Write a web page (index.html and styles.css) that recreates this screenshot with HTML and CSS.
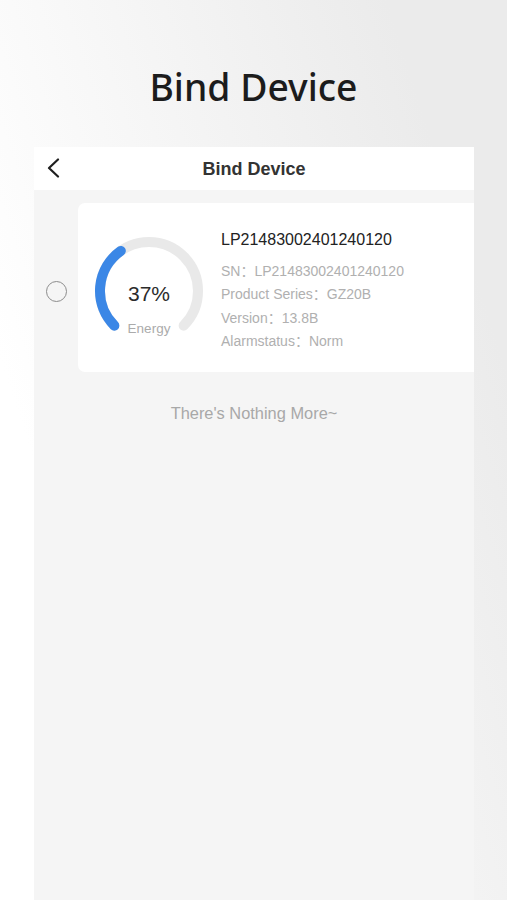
FILE: index.html
```html
<!DOCTYPE html>
<html lang="en">
<head>
<meta charset="utf-8">
<title>Bind Device</title>
<link rel="stylesheet" href="styles.css">
</head>
<body>
<div class="page">
  <header class="hero">
    <h1 class="hero-title">Bind Device</h1>
  </header>
  <main class="screen">
    <div class="navbar">
      <svg class="back" width="14" height="20" viewBox="0 0 14 20"><polyline points="12,1.5 3,10 12,18.5" fill="none" stroke="#1f1f1f" stroke-width="2.2" stroke-linecap="round" stroke-linejoin="round"/></svg>
      <div class="nav-title">Bind Device</div>
    </div>
    <div class="list">
      <div class="row">
        <div class="radio-col"><span class="radio"></span></div>
        <div class="card">
          <svg class="gauge" width="110" height="110" viewBox="0 0 110 110">
            <path d="M20.35 89.65 A49 49 0 1 1 89.65 89.65" fill="none" stroke="#e9e9e9" stroke-width="10" stroke-linecap="round"/>
            <path d="M20.35 89.65 A49 49 0 0 1 26.82 14.91" fill="none" stroke="#3b87e6" stroke-width="10" stroke-linecap="round"/>
            <text class="g-value" x="55" y="65" text-anchor="middle">37%</text>
            <text class="g-label" x="55" y="97.3" text-anchor="middle">Energy</text>
          </svg>
          <div class="info">
            <div class="name">LP21483002401240120</div>
            <div class="line">SN：LP21483002401240120</div>
            <div class="line">Product Series：GZ20B</div>
            <div class="line">Version：13.8B</div>
            <div class="line">Alarmstatus：Norm</div>
          </div>
        </div>
      </div>
      <p class="end">There's Nothing More~</p>
    </div>
  </main>
</div>
</body>
</html>
```

FILE: styles.css
```css
* { box-sizing: border-box; }
html, body { margin: 0; padding: 0; }
body {
  width: 507px;
  height: 900px;
  overflow: hidden;
  font-family: "Liberation Sans", Arial, "Noto Sans CJK SC", sans-serif;
  background: linear-gradient(72deg, #ffffff 22%, #ebebeb 85%);
}
.page {
  display: flex;
  flex-direction: column;
  height: 900px;
}
.hero {
  height: 147px;
  padding-top: 67px;
}
.hero-title {
  margin: 0;
  text-align: center;
  font-family: "Noto Sans", "Open Sans", sans-serif;
  font-weight: 500;
  font-size: 37.3px;
  line-height: 40px;
  color: #1c1c1c;
}
.screen {
  flex: 1;
  margin-left: 34px;
  width: 440px;
  background: #f5f5f5;
}
.navbar {
  height: 43px;
  background: #ffffff;
  display: flex;
  align-items: center;
  position: relative;
  padding-left: 46px;
}
.back {
  position: absolute;
  left: 12px;
  top: 11px;
}
.nav-title {
  flex: 1;
  margin-left: -46px;
  text-align: center;
  font-size: 18px;
  font-weight: bold;
  color: #333333;
  line-height: 20px;
}
.list {
  padding-top: 13px;
}
.row {
  display: flex;
  align-items: stretch;
}
.radio-col {
  width: 44px;
  display: flex;
  align-items: center;
  justify-content: center;
}
.radio {
  width: 21px;
  height: 21px;
  border: 1.5px solid #8c8c8c;
  border-radius: 50%;
  margin-top: 7px;
}
.card {
  flex: 1;
  height: 169px;
  background: #ffffff;
  border-radius: 7px 0 0 7px;
  display: flex;
  align-items: flex-start;
  padding: 27px 0 0 16px;
}
.gauge {
  margin-top: 6px;
  flex: none;
}
.g-value {
  font-family: "Liberation Sans", Arial, sans-serif;
  font-size: 21px;
  fill: #2b2b2b;
}
.g-label {
  font-family: "Liberation Sans", Arial, sans-serif;
  font-size: 13.5px;
  fill: #ababab;
}
.info {
  margin-left: 17px;
}
.name {
  font-size: 16px;
  line-height: 20px;
  color: #222222;
  margin-bottom: 10px;
}
.line {
  font-size: 14px;
  line-height: 23.3px;
  color: #b0b0b0;
}
.end {
  margin: 31px 0 0;
  text-align: center;
  font-size: 16.4px;
  line-height: 20px;
  color: #a8a8a8;
}
```
